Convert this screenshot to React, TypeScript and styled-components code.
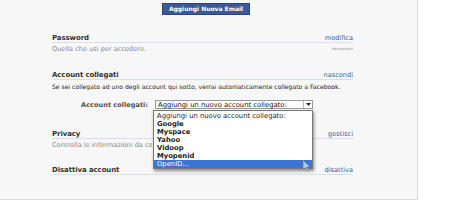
import React from "react"
import styled, { createGlobalStyle } from "styled-components"

const GlobalStyle = createGlobalStyle`
  html, body {
    margin: 0;
    padding: 0;
    background: #fff;
  }
  body {
    font-family: "DejaVu Sans", Verdana, sans-serif;
    font-size: 7px;
    color: #333;
  }
`

const Panel = styled.div`
  position: relative;
  width: 417px;
  height: 196px;
  background: #f7f7f7;
  border-right: 1px solid #dcdcdc;
  border-bottom: 1px solid #dcdcdc;
  padding-top: 3px;
  box-sizing: content-box;
`

const ButtonRow = styled.div`
  display: flex;
  padding-left: 162px;
`

const BlueButton = styled.button`
  width: 88px;
  height: 12px;
  padding: 0;
  background: #3b5998;
  border: 1px solid #29447e;
  color: #fff;
  font-family: "DejaVu Sans", Verdana, sans-serif;
  font-size: 6px;
  font-weight: bold;
  line-height: 10px;
`

const Column = styled.div`
  width: 301px;
  margin-left: 52px;
`

const Section = styled.div<{ $top: number }>`
  margin-top: ${(p) => p.$top}px;
  position: relative;
`

const HeadRow = styled.div`
  display: flex;
  justify-content: space-between;
  align-items: center;
  height: 8px;
  padding-top: 1px;
  border-bottom: 1px solid #d8dfea;
`

const Title = styled.span`
  font-weight: bold;
  font-size: 7px;
  color: #333;
  letter-spacing: -0.1px;
`

const Link = styled.span`
  color: #3b5998;
  font-size: 6.6px;
`

const SubRow = styled.div<{ $dark?: boolean }>`
  display: flex;
  justify-content: space-between;
  align-items: center;
  height: 8px;
  margin-top: 2px;
  font-size: ${(p) => (p.$dark ? "6.1px" : "6.6px")};
  color: ${(p) => (p.$dark ? "#222" : "#8a8a8a")};
  white-space: nowrap;
`

const Clipped = styled.span`
  display: block;
  width: 100px;
  overflow: hidden;
`

const Stars = styled.span`
  color: #999;
  font-size: 6px;
  letter-spacing: -0.3px;
`

const SelectRow = styled.div`
  display: flex;
  align-items: center;
  margin-top: 10px;
  height: 9px;
`

const Label = styled.span`
  width: 96px;
  text-align: right;
  color: #555;
  font-size: 6.6px;
  font-weight: bold;
`

const Select = styled.div`
  margin-left: 7px;
  width: 154px;
  height: 7px;
  border: 1px solid #999;
  background: #fff;
  display: flex;
  align-items: center;
  justify-content: space-between;
  font-size: 6.8px;
  color: #111;
  padding-left: 2px;
`

const Arrow = styled.div`
  width: 8px;
  height: 7px;
  border-left: 1px solid #bbb;
  display: flex;
  align-items: center;
  justify-content: center;
`

const Menu = styled.ul`
  position: absolute;
  left: 101px;
  top: 40px;
  width: 158px;
  margin: 0;
  padding: 1px 0 0 0;
  list-style: none;
  background: #fff;
  border: 1px solid #777;
  box-shadow: 1px 2px 3px rgba(0, 0, 0, 0.45);
  z-index: 2;
`

const Item = styled.li<{ $active?: boolean }>`
  height: 8px;
  line-height: 8px;
  padding-left: 3px;
  font-size: 6.8px;
  font-weight: ${(p) => (p.$active ? "normal" : "bold")};
  color: ${(p) => (p.$active ? "#fff" : "#222")};
  background: ${(p) => (p.$active ? "#3a75d4" : "transparent")};
`

const FirstItem = styled(Item)`
  font-weight: normal;
`

const Cursor = styled.svg`
  position: absolute;
  left: 250px;
  top: 89px;
  z-index: 3;
`

export default function App() {
  return (
    <>
      <GlobalStyle />
      <Panel>
        <ButtonRow>
          <BlueButton>Aggiungi Nuova Email</BlueButton>
        </ButtonRow>
        <Column>
          <Section $top={18}>
            <HeadRow>
              <Title>Password</Title>
              <Link>modifica</Link>
            </HeadRow>
            <SubRow>
              <span>Quella che usi per accedere.</span>
              <Stars>********</Stars>
            </SubRow>
          </Section>
          <Section $top={17}>
            <HeadRow>
              <Title>Account collegati</Title>
              <Link>nascondi</Link>
            </HeadRow>
            <SubRow $dark>
              <span>Se sei collegato ad uno degli account qui sotto, verrai automaticamente collegato a Facebook.</span>
            </SubRow>
            <SelectRow>
              <Label>Account collegati:</Label>
              <Select>
                <span>Aggiungi un nuovo account collegato:</span>
                <Arrow>
                  <svg width="5" height="3" viewBox="0 0 5 3">
                    <path d="M0 0 L5 0 L2.5 3 Z" fill="#222" />
                  </svg>
                </Arrow>
              </Select>
            </SelectRow>
            <Menu>
              <FirstItem>Aggiungi un nuovo account collegato:</FirstItem>
              <Item>Google</Item>
              <Item>Myspace</Item>
              <Item>Yahoo</Item>
              <Item>Vidoop</Item>
              <Item>Myopenid</Item>
              <Item $active>OpenID...</Item>
            </Menu>
            <Cursor width="9" height="13" viewBox="0 0 9 13">
              <path d="M1 1 L1 11 L3.5 8.5 L5.5 12 L7 11.3 L5 8 L8 8 Z" fill="rgba(255,255,255,0.6)" stroke="rgba(90,100,130,0.7)" strokeWidth="0.8" />
            </Cursor>
          </Section>
          <Section $top={20}>
            <HeadRow>
              <Title>Privacy</Title>
              <Link>gestisci</Link>
            </HeadRow>
            <SubRow>
              <Clipped>Controlla le informazioni da condividere.</Clipped>
            </SubRow>
          </Section>
          <Section $top={16}>
            <HeadRow>
              <Title>Disattiva account</Title>
              <Link>disattiva</Link>
            </HeadRow>
          </Section>
        </Column>
      </Panel>
    </>
  )
}
